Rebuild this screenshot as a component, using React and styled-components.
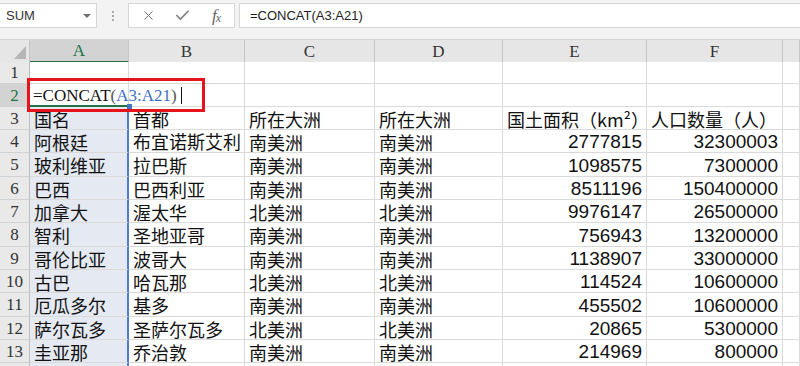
import React from 'react';
import styled, { createGlobalStyle } from 'styled-components';
import { X, Check } from 'lucide-react';

const Global = createGlobalStyle`
  html, body { margin: 0; padding: 0; background: #fff; overflow: hidden; }
  * { box-sizing: border-box; }
`;

const COLS = '30px 99px 116px 130px 128px 144px 136px 1fr';
const CJK = '"Noto Sans CJK SC", "Noto Sans", sans-serif';
const SERIF = '"Liberation Serif", "Noto Sans CJK SC", serif';
const SANS = '"Liberation Sans", Arial, sans-serif';

const Page = styled.div`
  position: relative;
  width: 800px;
  height: 366px;
  overflow: hidden;
  background: #fff;
`;

const Toolbar = styled.div`
  display: flex;
  align-items: flex-start;
  height: 39px;
  padding-top: 3px;
  background: #f3f3f3;
`;

const NameBox = styled.div`
  width: 97px;
  height: 25px;
  background: #fff;
  border: 1px solid #d6d6d6;
  border-left: none;
  display: flex;
  align-items: center;
  justify-content: space-between;
  padding: 0 5px 0 6px;
  font-family: ${SANS};
  font-size: 13px;
  color: #333;
`;

const DropArrow = styled.span`
  width: 0;
  height: 0;
  border-left: 4px solid transparent;
  border-right: 4px solid transparent;
  border-top: 4px solid #707070;
`;

const Grip = styled.div`
  width: 31px;
  height: 25px;
  display: flex;
  flex-direction: column;
  align-items: center;
  justify-content: center;
  gap: 2px;
`;

const GripDot = styled.span`
  width: 2px;
  height: 2px;
  background: #a8a8a8;
`;

const ButtonBox = styled.div`
  width: 107px;
  height: 25px;
  background: #fff;
  border: 1px solid #d6d6d6;
  display: flex;
  align-items: center;
  padding-left: 2px;
`;

const IconSlot = styled.span`
  width: 34px;
  display: flex;
  align-items: center;
  justify-content: center;
  color: #737373;
`;

const Fx = styled.span`
  font-family: ${SERIF};
  font-style: italic;
  font-size: 17px;
  color: #666;
  letter-spacing: -1px;
  line-height: 1;
  & sub { font-size: 12px; vertical-align: -1px; }
`;

const FormulaInput = styled.div`
  flex: 1;
  margin-left: 4px;
  height: 25px;
  background: #fff;
  border: 1px solid #d6d6d6;
  border-right: none;
  display: flex;
  align-items: center;
  padding-left: 10px;
  font-family: ${SANS};
  font-size: 13px;
  color: #222;
`;

const Sheet = styled.div`
  display: flex;
  flex-direction: column;
`;

const Row = styled.div`
  display: grid;
  grid-template-columns: ${COLS};
  height: ${(p) => p.$h}px;
  flex: none;
`;

const Corner = styled.div`
  background: #e6e6e6;
  border-top: 1px solid #d4d4d4;
  border-right: 1px solid #c4c4c4;
  border-bottom: 1px solid #bdbdbd;
  display: flex;
  align-items: flex-end;
  justify-content: flex-end;
  padding: 0 3px 3px 0;
`;

const CornerTri = styled.span`
  width: 0;
  height: 0;
  border-left: 12px solid transparent;
  border-bottom: 13px solid #b6b6b6;
`;

const ColHead = styled.div`
  background: ${(p) => (p.$active ? '#d3d3d3' : '#e6e6e6')};
  border-top: 1px solid #d4d4d4;
  border-right: 1px solid #c6c6c6;
  border-bottom: ${(p) => (p.$active ? '2px solid #217346' : '1px solid #bdbdbd')};
  display: flex;
  align-items: center;
  justify-content: center;
  font-family: ${SERIF};
  font-size: 17px;
  color: ${(p) => (p.$active ? '#217346' : '#333')};
  padding-top: 1px;
`;

const RowHead = styled.div`
  background: ${(p) => (p.$active ? '#d3d3d3' : '#e9e9e9')};
  border-right: 1px solid #bcbcbc;
  border-bottom: 1px solid #d2d2d2;
  display: flex;
  align-items: center;
  justify-content: center;
  font-family: ${SERIF};
  font-size: 17px;
  color: ${(p) => (p.$active ? '#217346' : '#333')};
  padding-top: 1px;
`;

const Cell = styled.div`
  position: relative;
  border-right: 1px solid #dadada;
  border-bottom: 1px solid #dadada;
  display: flex;
  align-items: center;
  justify-content: ${(p) => (p.$num ? 'flex-end' : 'flex-start')};
  padding: 1px ${(p) => (p.$num ? 4 : 3)}px 0 4px;
  white-space: nowrap;
  overflow: ${(p) => (p.$over ? 'visible' : 'hidden')};
  font-family: ${(p) => (p.$num ? SANS : CJK)};
  font-size: ${(p) => (p.$num ? '19px' : '18px')};
  line-height: 1;
  color: #111;
  background: ${(p) => (p.$sel ? '#e4e9f2' : '#fff')};
  ${(p) => p.$sel && 'border-right: 2px solid #4f7ccc;'}
  ${(p) => p.$active && 'border-bottom: 2px solid #217346; z-index: 1;'}
`;

const ClipText = styled.span`
  display: block;
  overflow: hidden;
  max-width: 100%;
  line-height: 1.4;
`;

const FormulaText = styled.span`
  font-family: ${SERIF};
  font-size: 17px;
  color: #111;
  margin-left: -1px;
  display: flex;
  align-items: center;
`;

const Paren = styled.span`
  color: #555;
`;

const Ref = styled.span`
  color: #3f6fc6;
`;

const Caret = styled.span`
  display: inline-block;
  width: 1px;
  height: 17px;
  background: #111;
  margin-left: 4px;
`;

const RedBox = styled.div`
  position: absolute;
  left: 27px;
  top: 78px;
  width: 178px;
  height: 34px;
  border: 3px solid #e5141b;
  pointer-events: none;
  z-index: 3;
`;

const RangeHandle = styled.div`
  position: absolute;
  left: 127px;
  top: 104px;
  width: 5px;
  height: 5px;
  background: #4472c4;
  z-index: 4;
`;

const data = [
  ['阿根廷', '布宜诺斯艾利斯', '南美洲', '南美洲', '2777815', '32300003'],
  ['玻利维亚', '拉巴斯', '南美洲', '南美洲', '1098575', '7300000'],
  ['巴西', '巴西利亚', '南美洲', '南美洲', '8511196', '150400000'],
  ['加拿大', '渥太华', '北美洲', '北美洲', '9976147', '26500000'],
  ['智利', '圣地亚哥', '南美洲', '南美洲', '756943', '13200000'],
  ['哥伦比亚', '波哥大', '南美洲', '南美洲', '1138907', '33000000'],
  ['古巴', '哈瓦那', '北美洲', '北美洲', '114524', '10600000'],
  ['厄瓜多尔', '基多', '南美洲', '南美洲', '455502', '10600000'],
  ['萨尔瓦多', '圣萨尔瓦多', '北美洲', '北美洲', '20865', '5300000'],
  ['圭亚那', '乔治敦', '南美洲', '南美洲', '214969', '800000'],
];

const letters = ['A', 'B', 'C', 'D', 'E', 'F', ''];

export default function App() {
  return (
    <>
      <Global />
      <Page>
        <Toolbar>
          <NameBox>
            <span>SUM</span>
            <DropArrow />
          </NameBox>
          <Grip>
            <GripDot />
            <GripDot />
            <GripDot />
          </Grip>
          <ButtonBox>
            <IconSlot><X size={15} strokeWidth={1.6} /></IconSlot>
            <IconSlot><Check size={17} strokeWidth={2.4} color="#808080" /></IconSlot>
            <IconSlot><Fx>f<sub>x</sub></Fx></IconSlot>
          </ButtonBox>
          <FormulaInput>=CONCAT(A3:A21)</FormulaInput>
        </Toolbar>
        <Sheet>
          <Row $h={23}>
            <Corner><CornerTri /></Corner>
            {letters.map((l, i) => (
              <ColHead key={i} $active={i === 0}>{l}</ColHead>
            ))}
          </Row>
          <Row $h={22}>
            <RowHead>1</RowHead>
            {letters.map((_, i) => <Cell key={i} />)}
          </Row>
          <Row $h={23}>
            <RowHead $active>2</RowHead>
            <Cell $over $active>
              <FormulaText>
                =CONCAT<Paren>(</Paren><Ref>A3:A21</Ref><Paren>)</Paren><Caret />
              </FormulaText>
            </Cell>
            {letters.slice(1).map((_, i) => <Cell key={i} />)}
          </Row>
          <Row $h={23}>
            <RowHead>3</RowHead>
            <Cell $sel>国名</Cell>
            <Cell>首都</Cell>
            <Cell>所在大洲</Cell>
            <Cell>所在大洲</Cell>
            <Cell>国土面积（km²）</Cell>
            <Cell>人口数量（人）</Cell>
            <Cell />
          </Row>
          {data.map((r, idx) => (
            <Row key={idx} $h={idx % 3 === 1 ? 24 : 23}>
              <RowHead>{idx + 4}</RowHead>
              <Cell $sel>{r[0]}</Cell>
              <Cell>{idx === 0 ? <ClipText>{r[1]}</ClipText> : r[1]}</Cell>
              <Cell>{r[2]}</Cell>
              <Cell>{r[3]}</Cell>
              <Cell $num>{r[4]}</Cell>
              <Cell $num>{r[5]}</Cell>
              <Cell />
            </Row>
          ))}
          <Row $h={23}>
            <RowHead />
            <Cell $sel />
            {letters.slice(1).map((_, i) => <Cell key={i} />)}
          </Row>
        </Sheet>
        <RedBox />
        <RangeHandle />
      </Page>
    </>
  );
}
